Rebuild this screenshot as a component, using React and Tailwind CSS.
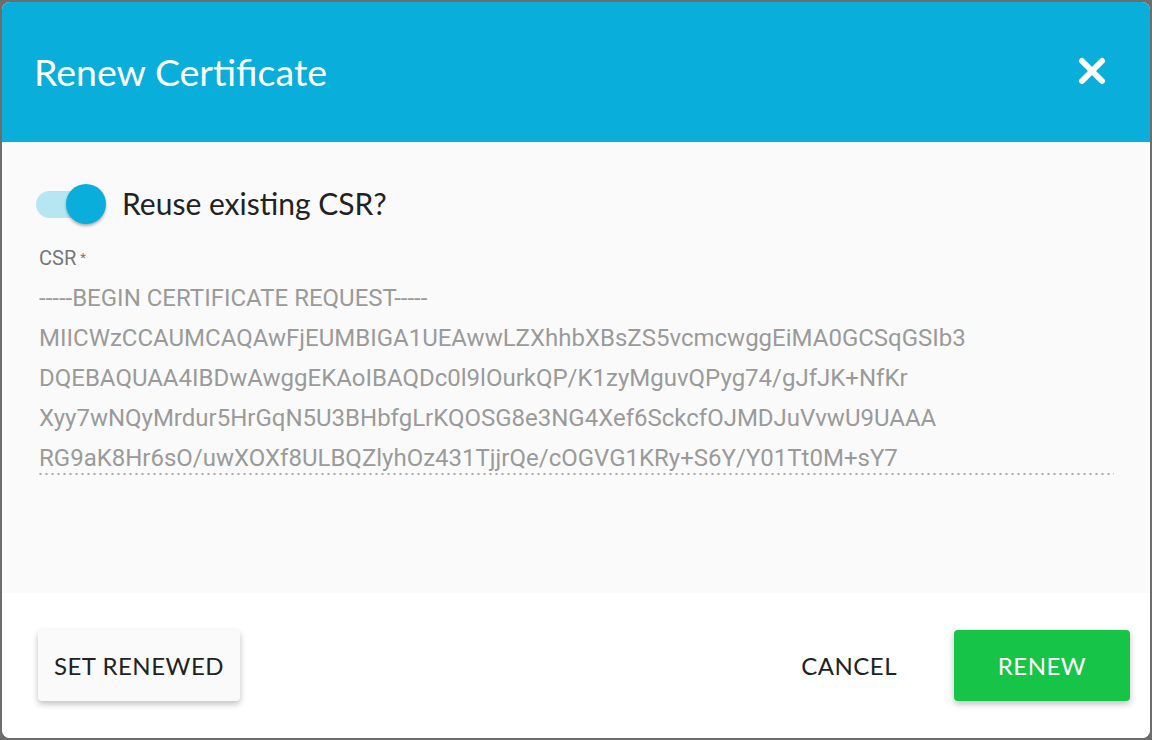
import React from "react";

const lines = [
  "-----BEGIN CERTIFICATE REQUEST-----",
  "MIICWzCCAUMCAQAwFjEUMBIGA1UEAwwLZXhhbXBsZS5vcmcwggEiMA0GCSqGSIb3",
  "DQEBAQUAA4IBDwAwggEKAoIBAQDc0l9lOurkQP/K1zyMguvQPyg74/gJfJK+NfKr",
  "Xyy7wNQyMrdur5HrGqN5U3BHbfgLrKQOSG8e3NG4Xef6SckcfOJMDJuVvwU9UAAA",
  "RG9aK8Hr6sO/uwXOXf8ULBQZlyhOz431TjjrQe/cOGVG1KRy+S6Y/Y01Tt0M+sY7",
];

export default function App() {
  return (
    <div className="w-[1152px] h-[740px] bg-[#6d6d6d] p-[2px]" style={{ fontFamily: "Lato, 'Noto Sans', sans-serif" }}>
      <div className="w-full h-full rounded-[8px] overflow-hidden flex flex-col bg-white">
        <div className="h-[140px] shrink-0 bg-[#09aedb] flex items-center justify-between pl-[32px] pr-[44px]">
          <h1 className="text-white text-[37.5px] leading-none pb-[1px]">Renew Certificate</h1>
          <svg width="28" height="28" viewBox="0 0 28 28" className="mb-[2px]">
            <path d="M4 4 L24 24 M24 4 L4 24" stroke="white" strokeWidth="6" strokeLinecap="round" />
          </svg>
        </div>
        <div className="flex-1 bg-[#fafafa] pl-[34px] pr-[36px] pt-[41px]">
          <div className="flex items-center h-[42px]">
            <div className="relative w-[70px] h-[40px] flex items-center">
              <div className="w-[58px] h-[27px] rounded-full bg-[#b7e6f3]"></div>
              <div className="absolute left-[30px] top-0 w-[40px] h-[40px] rounded-full bg-[#09aedb] shadow-[0_2px_3px_rgba(0,0,0,0.3)]"></div>
            </div>
            <span className="ml-[16px] text-[30px] text-[#222] leading-none pb-[2px]">Reuse existing CSR?</span>
          </div>
          <div className="mt-[18px] pl-[3px]" style={{ fontFamily: "Roboto, sans-serif" }}>
            <div className="text-[20px] text-[#777] h-[30px] leading-[30px]">
              CSR<sup className="text-[13px] ml-[4px] relative top-[-3px]">*</sup>
            </div>
            <div className="pt-[5px] h-[202px] bg-[linear-gradient(to_right,#a8a8a8_2px,transparent_2px)] bg-[length:6px_2px] bg-repeat-x bg-bottom">
              {lines.map((l) => (
                <div key={l} className="text-[24px] leading-[40px] text-[#9a9a9a] whitespace-nowrap">{l}</div>
              ))}
            </div>
          </div>
        </div>
        <div className="h-[145px] shrink-0 bg-white flex items-center justify-between pl-[36px] pr-[20px]">
          <button className="h-[71px] w-[202px] rounded-[4px] bg-[#fafafa] text-[#222] text-[24px] tracking-[0.5px] shadow-[0_3px_6px_rgba(0,0,0,0.25)]">SET RENEWED</button>
          <div className="flex items-center">
            <button className="h-[71px] px-[22px] text-[#222] text-[24px] tracking-[0.5px] mr-[35px]">CANCEL</button>
            <button className="h-[71px] w-[176px] rounded-[4px] bg-[#16c447] text-white text-[24px] tracking-[0.5px] shadow-[0_3px_6px_rgba(0,0,0,0.25)]">RENEW</button>
          </div>
        </div>
      </div>
    </div>
  );
}
